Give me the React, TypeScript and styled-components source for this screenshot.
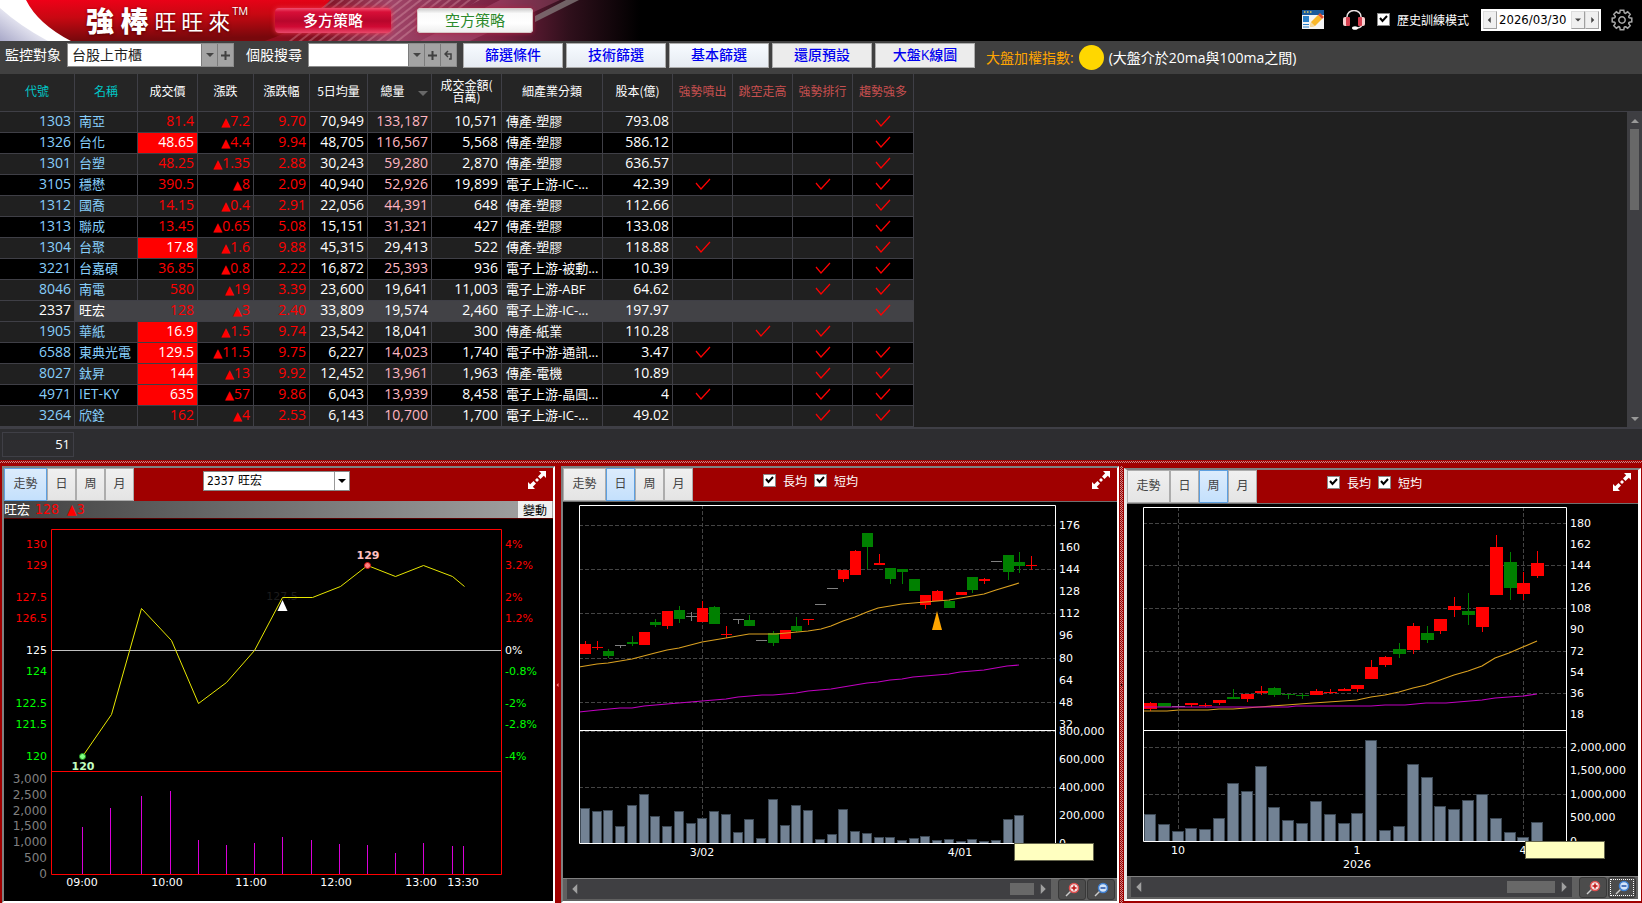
import React from 'react';
import styled, { createGlobalStyle, css } from 'styled-components';

const CJK = '"Noto Sans CJK TC"';
const UI = `"Open Sans", "DejaVu Sans", ${CJK}, sans-serif`;
const CHART = `"DejaVu Sans", ${CJK}, sans-serif`;

const GlobalStyle = createGlobalStyle`
  *, *::before, *::after { box-sizing: border-box; }
  body { margin: 0; background: #a00000; color: #fff; font: 14px/20px ${UI}; }
  button, input, select { font: inherit; margin: 0; padding: 0; border: 0; border-radius: 0; }
  svg { display: block; }
`;

const Page = styled.div`
  display: flex;
  flex-direction: column;
  min-height: 100vh;
`;

/* ---------- banner ---------- */

const Banner = styled.header`
  display: flex;
  align-items: center;
  height: 41px;
  background: #000;
  position: relative;
  overflow: hidden;
`;

const BannerArt = styled.svg`
  position: absolute;
  left: 0;
  top: 0;
`;

const Brand = styled.h1`
  display: flex;
  align-items: center;
  margin: 0 0 0 86px;
  width: 189px;
  height: 41px;
  font-family: ${CJK}, sans-serif;
  font-weight: 400;
  position: relative;
  text-shadow: 0 1px 3px #500;
  white-space: nowrap;
`;

const BrandStrong = styled.span`
  font-size: 28px;
  line-height: 38px;
  padding-bottom: 2px;
  font-weight: 900;
`;

const BrandLight = styled.span`
  margin-left: 6px;
  padding-bottom: 2px;
  font-size: 22px;
  line-height: 38px;
`;

const Trademark = styled.span`
  align-self: flex-start;
  margin-left: 2px;
  font: 11px/21px ${UI};
`;

const StrategyButton = styled.button<{ $long?: boolean }>`
  position: relative;
  width: 116px;
  height: 25px;
  margin-right: 26px;
  padding-bottom: 1px;
  border-radius: 4px;
  font-size: 15px;
  line-height: 24px;
  ${p => p.$long
    ? css`
        color: #fff;
        font-weight: 500;
        background: linear-gradient(#f05070, #d80f38 16%, #b8062c 52%, #d00a34 75%, #e8486a);
        box-shadow: 0 0 5px #f0304a;
      `
    : css`
        color: #2c8a2c;
        background: linear-gradient(#c8c8c8, #fafafa 22%, #fff 60%, #ededed);
        box-shadow: 0 0 4px #b02040, inset 0 0 0 1px #d8c8c8;
      `}
`;

const BannerTools = styled.div`
  display: flex;
  align-items: center;
  margin-left: auto;
  padding: 0 9px 2px 0;
  position: relative;
`;

const IconButton = styled.button<{ $gap: number }>`
  display: grid;
  place-items: center;
  margin-right: ${p => p.$gap}px;
  background: none;
`;

const CheckLabel = styled.label`
  display: flex;
  align-items: center;
  font: 12px/16px ${CJK}, sans-serif;
  color: #fff;
`;

const CheckBox = styled.input.attrs({ type: 'checkbox' })`
  appearance: none;
  width: 13px;
  height: 13px;
  margin-right: 7px;
  border: 1px solid #888;
  background: #fff;
  &:checked {
    background: #fff url("data:image/svg+xml,%3Csvg xmlns='http://www.w3.org/2000/svg' width='11' height='11'%3E%3Cpath d='M2 4l2.500 3L9 2' fill='none' stroke='black' stroke-width='2'/%3E%3C/svg%3E");
  }
`;

const DateBox = styled.div`
  display: flex;
  align-items: stretch;
  width: 120px;
  height: 22px;
  margin: 0 10px 0 12px;
  padding: 2px;
  background: #fff;
`;

const DateInput = styled.input`
  flex: 1;
  min-width: 0;
  padding-left: 2px;
  background: #fff;
  color: #000;
  font: 13px/18px "DejaVu Sans Condensed", "DejaVu Sans", sans-serif;
`;

const SmallStep = styled.button`
  display: grid;
  place-items: center;
  width: 14px;
  background: #f0f0f0;
  border: 1px solid #a0a0a0;
  border-top-color: #ddd;
  border-left-color: #ddd;
`;

/* ---------- filter toolbar ---------- */

const Toolbar = styled.div`
  display: flex;
  align-items: flex-start;
  height: 33px;
  padding: 2px 0 0 5px;
  background: #404040;
  white-space: nowrap;
`;

const FieldLabel = styled.label`
  width: 56px;
  margin-right: 6px;
  line-height: 23px;
`;

const Combo = styled.div<{ $width: number; $gap: number }>`
  display: flex;
  width: ${p => p.$width}px;
  height: 24px;
  margin-right: ${p => p.$gap}px;
  border: 1px solid #8c8c8c;
  background: #fff;
`;

const ComboSelect = styled.select`
  flex: 1;
  min-width: 0;
  padding-left: 4px;
  appearance: none;
  background: #fff;
  color: #222;
`;

const ComboInput = styled.input`
  flex: 1;
  min-width: 0;
  padding: 0 4px;
  background: #fff;
  color: #222;
`;

const ComboButton = styled.button`
  display: grid;
  place-items: center;
  width: 16px;
  background: #a3a3a3;
  border-left: 1px solid #7c7c7c;
`;

const FilterButton = styled.button<{ $plain?: boolean }>`
  width: 100px;
  height: 25px;
  margin-right: 3px;
  padding-bottom: 1px;
  border: 1px solid #acacac;
  background: ${p => (p.$plain ? '#ececec' : 'linear-gradient(#f7fbff, #e6ebf2)')};
  color: #0000f0;
  font-weight: 500;
  line-height: 22px;
`;

const IndexStatus = styled.div`
  display: flex;
  align-items: center;
  margin: 1px 0 0 8px;
  height: 27px;
  color: #ffa500;
`;

const Lamp = styled.span`
  width: 25px;
  height: 25px;
  margin: 0 5px;
  border-radius: 50%;
  background: #ffd700;
`;

const IndexNote = styled.span`
  color: #fff;
`;

/* ---------- stock table ---------- */

const GridArea = styled.section`
  display: flex;
  background: #202020;
  border-bottom: 2px solid #3f3f46;
`;

const StockTable = styled.table`
  flex: 1;
  width: 100%;
  min-width: 0;
  table-layout: fixed;
  border-collapse: separate;
  border-spacing: 0;
`;

const Th = styled.th<{ $color?: string; $sorted?: boolean }>`
  height: 38px;
  padding: 0 ${p => (p.$sorted ? 14 : 0)}px 4px 0;
  border-right: 1px solid #3f3f46;
  border-bottom: 1px solid #3f3f46;
  background: #252525;
  color: ${p => p.$color || '#fff'};
  font: 12px/12px ${CJK}, sans-serif;
  text-align: center;
  white-space: pre-line;
  position: relative;
  &:last-child { border-right: 0; }
`;

const SortMark = styled.svg`
  position: absolute;
  right: 3px;
  top: 17px;
`;

const Row = styled.tr<{ $active?: boolean }>`
  background: ${p => (p.$active ? '#424246' : '#202020')};
  &:nth-child(even) { background: ${p => (p.$active ? '#424246' : '#000')}; }
`;

const Td = styled.td<{ $color?: string; $fill?: string; $align?: string; $active?: boolean; $latin?: boolean }>`
  height: 21px;
  padding: 0 3px 2px;
  border-right: 1px solid ${p => (p.$active ? '#424246' : '#3f3f46')};
  border-bottom: 1px solid #3f3f46;
  color: ${p => p.$color || '#fff'};
  background: ${p => p.$fill || 'transparent'};
  text-align: ${p => p.$align || 'right'};
  font-size: ${p => (p.$align === 'left' && !p.$latin ? 13 : 14)}px;
  line-height: 18px;
  white-space: nowrap;
  overflow: hidden;
  ${p => p.$align === 'left' && css`padding-left: 4px; padding-right: 0;`}
`;

const UpMark = styled.span`
  font-size: 12px;
  line-height: 16px;
`;

const Filler = styled.td`
  padding: 0;
  background: #202020;
`;

const Tick = styled.svg`
  margin: 0 auto;
`;

const ScrollColumn = styled.div`
  display: flex;
  flex-direction: column;
  width: 15px;
  background: #3e3e42;
`;

const ScrollCap = styled.div`
  height: 38px;
  background: #252525;
  border-bottom: 1px solid #3f3f46;
`;

const ScrollArrow = styled.button<{ $end?: boolean }>`
  display: grid;
  place-items: center;
  width: 15px;
  height: 17px;
  margin-top: ${p => (p.$end ? 'auto' : '0')};
  background: none;
`;

const ScrollThumb = styled.div`
  width: 9px;
  height: 81px;
  margin: 0 auto;
  background: #686868;
`;

const SummaryBar = styled.div`
  height: 31px;
  padding: 3px 2px;
  background: #2d2d30;
`;

const SummaryCell = styled.div`
  width: 72px;
  height: 25px;
  padding-right: 3px;
  border: 1px solid #3f3f46;
  text-align: right;
  font-size: 13px;
  line-height: 23px;
`;

/* ---------- chart panels ---------- */

const checker = '#c98a8a 25%, #a00000 0 50%, #c98a8a 0 75%, #a00000 0';

const HSplitter = styled.div`
  display: flex;
  justify-content: center;
  height: 6px;
  padding-top: 1px;
  background: conic-gradient(${checker}) 0 1px / 2px 2px;
  background-clip: content-box;
  border-bottom: 3px solid #a00000;
`;

const VSplitter = styled.div<{ $dotted?: boolean }>`
  display: flex;
  align-items: center;
  justify-content: center;
  border: solid #a00000;
  border-width: 0 1px;
  background: ${p => (p.$dotted ? `conic-gradient(${checker}) 0 0 / 2px 2px` : '#a00000')};
`;

const Panels = styled.main`
  flex: 1;
  display: grid;
  grid-template-columns: minmax(0, 553fr) 6px minmax(0, 558fr) 5px minmax(0, 517fr);
  align-items: stretch;
  padding: 0 1px 0 2px;
  background: #a00000;
`;

const Panel = styled.section<{ $inner?: boolean }>`
  display: flex;
  flex-direction: column;
  align-self: start;
  margin: ${p => (p.$inner ? '2px 0' : '0')};
  border: 2px solid;
  border-color: #808080 #fff #fff #808080;
  background: #000;
  ${p => p.$inner && css`border-left: 3px solid #e8e8e8; border-right-width: 3px;`}
`;

const PanelHead = styled.div`
  display: flex;
  height: 33px;
  background: #a00000;
`;

const Tab = styled.button<{ $on?: boolean; $wide?: boolean }>`
  width: ${p => (p.$wide ? 43 : 29)}px;
  height: 33px;
  padding-bottom: 4px;
  border: 1px solid ${p => (p.$on ? '#5c9fe0' : '#acacac')};
  background: ${p => (p.$on ? 'linear-gradient(#dcecfc, #c4e0fc)' : 'linear-gradient(#f0f0f0, #e4e4e4)')};
  color: #444;
  font: 12px/16px ${CJK}, sans-serif;
`;

const SymbolCombo = styled.div`
  display: flex;
  width: 147px;
  height: 20px;
  margin: 3px 0 0 69px;
  border: 1px solid #888;
  background: #fff;
`;

const SymbolSelect = styled.select`
  flex: 1;
  min-width: 0;
  padding-left: 3px;
  appearance: none;
  background: #fff;
  color: #000;
  font: 12px/18px "DejaVu Sans Condensed", ${CJK}, sans-serif;
`;

const SymbolArrow = styled.button`
  display: grid;
  place-items: center;
  width: 15px;
  background: #fff;
  border-left: 1px solid #999;
`;

const Averages = styled.div`
  display: flex;
  align-items: center;
  gap: 7px;
  height: 25px;
  margin-left: 70px;
`;

const Expand = styled.button`
  width: 18px;
  height: 18px;
  margin: 3px 7px 0 auto;
  background: none;
`;

const QuoteBar = styled.div`
  display: flex;
  align-items: center;
  height: 18px;
  background: linear-gradient(90deg, #404040, #a4a4a4);
  border-bottom: 1px solid #500;
  font-size: 13px;
  line-height: 17px;
  white-space: pre;
`;

const QuoteValue = styled.span`
  margin-left: 5px;
  color: #f00;
  font: 14px/17px "DejaVu Sans Condensed", "DejaVu Sans", sans-serif;
`;

const ChangeButton = styled.button`
  align-self: stretch;
  width: 34px;
  margin: 0 1px 0 auto;
  background: #f0f0f0;
  color: #000;
  font: 12px/17px ${CJK}, sans-serif;
`;

const HeadLine = styled.div`
  height: 1px;
  background: #707070;
`;

const Chart = styled.svg`
  width: 100%;
  height: auto;
  background: #000;
  font-family: ${CHART};
  font-size: 11px;
  fill: #fff;
`;

const PanelFoot = styled.div`
  display: flex;
  align-items: flex-start;
  height: 23px;
  padding: 0 2px 0 4px;
  border-top: 1px solid #808080;
  background: #606060;
`;

const Track = styled.div`
  display: flex;
  flex: 1;
  align-items: center;
  height: 20px;
  padding: 0 2px;
  background: #3f3f42;
`;

const TrackArrow = styled.button`
  display: grid;
  place-items: center;
  width: 14px;
  height: 20px;
  background: none;
`;

const TrackThumb = styled.div<{ $w: number }>`
  width: ${p => p.$w}px;
  height: 12px;
  margin: 0 1px 0 auto;
  background: #686868;
`;

const ZoomButtons = styled.div`
  display: flex;
  gap: 1px;
  margin-left: 7px;
`;

const ZoomButton = styled.button<{ $focus?: boolean }>`
  display: grid;
  place-items: center;
  width: 28px;
  height: 21px;
  border: 1px solid #383838;
  border-radius: 3px;
  background: #4c4c4c;
  ${p => p.$focus && css`outline: 1px dotted #fff; outline-offset: -3px;`}
`;

/* ---------- icons ---------- */

type Dir = 'left' | 'right' | 'up' | 'down';
const arrowPaths: Record<Dir, string> = {
  left: 'M5 0V8L1 4Z', right: 'M3 0V8L7 4Z', up: 'M0 6H8L4 2Z', down: 'M0 2H8L4 6Z',
};
const Arrow = ({ dir, color = '#444', size = 8 }: { dir: Dir; color?: string; size?: number }) => (
  <svg width={size} height={size} viewBox="0 0 8 8" aria-hidden="true"><path d={arrowPaths[dir]} fill={color} /></svg>
);

const PlusIcon = () => (
  <svg width="9" height="9" aria-hidden="true"><path d="M4.500 0V9M0 4.500H9" stroke="#404040" strokeWidth="2" /></svg>
);

const BackIcon = () => (
  <svg width="9" height="10" fill="none" stroke="#404040" aria-hidden="true">
    <path d="M4 1L1 4L4 7M1 4H7V9H5" strokeWidth="1.500" />
  </svg>
);

const ExpandIcon = () => (
  <svg width="18" height="18" fill="#fff" aria-hidden="true">
    <path d="M11 0H18V7L15.800 4.800L12.500 8L10 5.500L13.200 2.200Z" />
    <path d="M7 18H0V11L2.200 13.200L5.500 10L8 12.500L4.800 15.800Z" />
    <path d="M7 9L9 7L11 9L9 11Z" />
  </svg>
);

const EditWindowIcon = () => (
  <svg width="22" height="19" aria-hidden="true">
    <path d="M0 0H22V19H0Z" fill="#f4f4f4" />
    <path d="M0 0H22V5H0Z" fill="#1a5a9c" />
    <path d="M2 2h1.500M5 2h1.500M8 2h1.500" stroke="#e8d060" strokeWidth="1.500" />
    <path d="M1 6H7V12H1Z" fill="#2a80c8" />
    <path d="M1 14.500H7M1 17H7" stroke="#2a80c8" />
    <path d="M8 17L9 12L16 5L20 9L13 16Z" fill="#f9b72a" />
    <path d="M16 5L18 3L22 7L20 9Z" fill="#e4502c" />
    <path d="M8 17L9 12L13 16Z" fill="#f4d8a0" />
  </svg>
);

const HeadsetIcon = () => (
  <svg width="22" height="20" fill="none" aria-hidden="true">
    <path d="M4 8C3 -2 19 -2 18 8M19 14C19 17 16 18 13 18" stroke="#e8e0e0" strokeWidth="1.500" />
    <rect x="0" y="7" width="5" height="9" rx="2" fill="#f8d0d0" />
    <rect x="3" y="7" width="4" height="9" rx="1" fill="#d84050" />
    <rect x="17" y="7" width="5" height="9" rx="2" fill="#f8d0d0" />
    <rect x="15" y="7" width="4" height="9" rx="1" fill="#d84050" />
    <ellipse cx="12" cy="18" rx="3" ry="1.800" fill="#fff" />
  </svg>
);

const teeth = Array.from({ length: 8 }, (_, i) => i * 45);
const GearIcon = () => (
  <svg width="22" height="22" viewBox="-11 -11 22 22" fill="none" stroke="#a8a8a8" strokeWidth="1.500" aria-hidden="true">
    {teeth.map(a => (
      <path key={a} transform={`rotate(${a})`} d="M-2.200 -7.400L-1.800 -9.800H1.800L2.200 -7.400Q2.800 -6.400 4.100 -6.700" />
    ))}
    <circle r="3.200" />
  </svg>
);

const MagnifierIcon = ({ minus }: { minus?: boolean }) => (
  <svg width="15" height="15" aria-hidden="true">
    <path d="M1 14L6 9" stroke="#ccc" strokeWidth="1.500" />
    <circle cx="9" cy="6" r="4.500" fill={minus ? '#d4e4f8' : '#f4e4e4'} stroke={minus ? '#3f7fd0' : '#e05050'} strokeWidth="1.500" />
    <path d={minus ? 'M6.500 6H11.500' : 'M6.500 6H11.500M9 3.500V8.500'} stroke={minus ? '#1f50a8' : '#c01010'} strokeWidth="1.500" />
  </svg>
);

/* ---------- data ---------- */

const columns: [string, number, string?][] = [
  ['代號', 75, '#00c8c8'], ['名稱', 63, '#00c8c8'], ['成交價', 60], ['漲跌', 56], ['漲跌幅', 56],
  ['5日均量', 58], ['總量', 64], ['成交金額(\n百萬)', 70], ['細產業分類', 101], ['股本(億)', 70],
  ['強勢噴出', 60, '#c85050'], ['跳空走高', 60, '#c85050'], ['強勢排行', 60, '#c85050'], ['趨勢強多', 61, '#c85050'],
];

type Stock = [string, string, string, string, string, string, string, string, string, string, string];
// The last field marks which of the four signal columns are ticked.
const stocks: Stock[] = [
  ['1303', '南亞', '81.4', '7.2', '9.70', '70,949', '133,187', '10,571', '傳產-塑膠', '793.08', '0001'],
  ['1326', '台化', '48.65', '4.4', '9.94', '48,705', '116,567', '5,568', '傳產-塑膠', '586.12', '0001'],
  ['1301', '台塑', '48.25', '1.35', '2.88', '30,243', '59,280', '2,870', '傳產-塑膠', '636.57', '0001'],
  ['3105', '穩懋', '390.5', '8', '2.09', '40,940', '52,926', '19,899', '電子上游-IC-...', '42.39', '1011'],
  ['1312', '國喬', '14.15', '0.4', '2.91', '22,056', '44,391', '648', '傳產-塑膠', '112.66', '0001'],
  ['1313', '聯成', '13.45', '0.65', '5.08', '15,151', '31,321', '427', '傳產-塑膠', '133.08', '0001'],
  ['1304', '台聚', '17.8', '1.6', '9.88', '45,315', '29,413', '522', '傳產-塑膠', '118.88', '1001'],
  ['3221', '台嘉碩', '36.85', '0.8', '2.22', '16,872', '25,393', '936', '電子上游-被動...', '10.39', '0011'],
  ['8046', '南電', '580', '19', '3.39', '23,600', '19,641', '11,003', '電子上游-ABF', '64.62', '0011'],
  ['2337', '旺宏', '128', '3', '2.40', '33,809', '19,574', '2,460', '電子上游-IC-...', '197.97', '0001'],
  ['1905', '華紙', '16.9', '1.5', '9.74', '23,542', '18,041', '300', '傳產-紙業', '110.28', '0110'],
  ['6588', '東典光電', '129.5', '11.5', '9.75', '6,227', '14,023', '1,740', '電子中游-通訊...', '3.47', '1011'],
  ['8027', '鈦昇', '144', '13', '9.92', '12,452', '13,961', '1,963', '傳產-電機', '10.89', '0011'],
  ['4971', 'IET-KY', '635', '57', '9.86', '6,043', '13,939', '8,458', '電子上游-晶圓...', '4', '1011'],
  ['3264', '欣銓', '162', '4', '2.53', '6,143', '10,700', '1,700', '電子上游-IC-...', '49.02', '0011'],
];
const limitUp = ['1326', '1304', '1905', '6588', '8027', '4971'];
const plainVolume = ['1304', '8046', '2337', '1905'];

// Candle: colour, body top, body bottom, wick top, wick bottom.
type Candle = [string, number, number, number, number];
const R = '#f00', G = '#008000', N = '#808080';
const daily: Candle[] = [
  [R, 139, 149, 136, 149], [R, 142, 143, 136, 145], [G, 146, 151, 144, 153], [N, 140, 141, 140, 143], [G, 137, 139, 131, 141],
  [R, 127, 140, 127, 140], [G, 117, 120, 114, 122], [R, 106, 121, 106, 124], [G, 105, 114, 101, 118], [N, 111, 112, 107, 116],
  [R, 103, 117, 96, 117], [G, 102, 119, 101, 119], [R, 129, 130, 121, 133], [N, 114, 115, 114, 119], [G, 115, 121, 110, 121],
  [N, 135, 136, 135, 136], [G, 128, 138, 126, 141], [R, 125, 134, 125, 134], [G, 121, 126, 112, 127], [R, 114, 115, 114, 120],
  [N, 99, 100, 99, 100], [N, 83, 84, 83, 84], [R, 65, 74, 65, 77], [R, 46, 70, 45, 70], [G, 28, 42, 28, 64],
  [R, 58, 60, 49, 60], [G, 63, 74, 63, 79], [G, 64, 67, 64, 79], [G, 74, 86, 74, 86], [R, 90, 100, 90, 104],
  [R, 86, 96, 85, 96], [G, 96, 103, 95, 103], [R, 87, 90, 87, 90], [G, 72, 85, 72, 88], [R, 74, 76, 73, 79],
  [N, 56, 57, 56, 57], [G, 50, 67, 50, 75], [G, 57, 61, 47, 68], [R, 60, 61, 51, 65],
];
const dailyVolume = [303, 306, 305, 321, 300, 289, 311, 321, 306, 318, 313, 306, 309, 327, 314, 333, 294, 320, 300, 305, 334, 329, 304,
  326, 328, 332, 332, 335, 333, 331, 335, 334, 336, 334, 336, 335, 314, 310];
const dailyShort = '0,162 18,159 29,158 53,154 76,148 88,145 100,143 123,137 147,133 170,129 197,129 229,126 242,124 252,121 264,116 276,112 288,107 299,103 323,99 346,97 370,95 405,89 417,85 440,78';
const dailyLong = '0,207 19,205 41,203 53,203 65,201 88,199 123,196 147,194 159,192 183,190 194,190 217,188 229,186 252,184 276,180 288,178 299,177 311,175 323,174 334,172 370,169 381,167 405,165 428,161 440,160';

const weekly: Candle[] = [
  [R, 196, 202, 195, 204], [G, 196, 200, 196, 200], [N, 199, 200, 197, 200], [R, 196, 198, 196, 200], [R, 198, 199, 196, 200],
  [R, 193, 196, 193, 198], [G, 190, 192, 182, 192], [R, 187, 192, 187, 195], [R, 184, 186, 179, 188], [G, 181, 188, 180, 190],
  [G, 187, 188, 187, 192], [G, 188, 189, 186, 192], [R, 184, 188, 182, 188], [R, 185, 186, 182, 187], [R, 182, 184, 181, 184],
  [R, 178, 182, 178, 185], [R, 160, 172, 153, 172], [R, 150, 158, 149, 160], [G, 142, 147, 136, 151], [R, 119, 143, 116, 147],
  [G, 126, 133, 119, 136], [R, 112, 124, 112, 127], [R, 99, 103, 90, 110], [G, 104, 108, 86, 118], [R, 100, 120, 100, 125],
  [R, 40, 88, 28, 88], [G, 55, 81, 45, 93], [R, 76, 87, 65, 93], [R, 56, 69, 44, 71],
];
const weeklyVolume = [307, 317, 324, 321, 322, 311, 276, 284, 259, 300, 313, 316, 294, 307, 316, 306, 233, 323, 319, 257, 270, 299, 302,
  293, 287, 311, 325, 330, 315];
const weeklyShort = '0,204 24,204 36,203 65,203 76,202 90,202 116,200 143,198 170,196 200,194 214,193 228,190 242,188 256,185 270,181 283,178 297,173 311,168 325,164 339,159 352,151 366,146 394,134';
const weeklyLong = '0,200 145,200 153,199 228,199 242,198 262,198 283,196 303,196 339,193 352,191 380,189 394,187';

type Label = [string, number];
interface KChartProps {
  title: string;
  size: [number, number];
  origin: [number, number];
  frame: [number, number, number];
  pitch: number;
  first: number;
  body: number;
  bar: number;
  candles: Candle[];
  volume: number[];
  short: string;
  long: string;
  gridH: number[];
  gridV: number[];
  scale: Label[];
  dates: [string, number, number][];
  marker?: number;
  tip: [number, number];
}

const KChart = (p: KChartProps) => {
  const [w, split, h] = p.frame;
  return (
    <Chart viewBox={`0 0 ${p.size[0]} ${p.size[1]}`} role="img" aria-label={p.title}>
      <g transform={`translate(${p.origin[0]} ${p.origin[1]})`}>
        <g stroke="#444" strokeDasharray="4 2" shapeRendering="crispEdges">
          {p.gridH.map(y => <path key={y} d={`M0 ${y + 0.5}H${w}`} />)}
          {p.gridV.map(x => <path key={x} d={`M${x + 0.5} 0V${h}`} />)}
        </g>
        {p.candles.map(([c, t, b, hi, lo], i) => {
          const x = Math.round(p.first + i * p.pitch);
          return (
            <g key={i} fill={c} shapeRendering="crispEdges">
              <rect x={x} y={hi} width="1" height={lo - hi} />
              <rect x={x - (p.body - 1) / 2} y={t} width={p.body} height={b - t} />
            </g>
          );
        })}
        {p.volume.map((y, i) => {
          const x = Math.round(p.first + i * p.pitch);
          return (
            <rect key={i} x={x - p.bar / 2 + 0.5} y={y + 0.5} width={p.bar - 1} height={h - y} fill="#728294" stroke="#3c4854" />
          );
        })}
        <polyline points={p.short} fill="none" stroke="#daa020" strokeWidth="1.200" />
        <polyline points={p.long} fill="none" stroke="#c000c0" strokeWidth="1.200" />
        {p.marker && <path d={`M${p.marker} 106L${p.marker + 5} 125H${p.marker - 5}Z`} fill="#ffa500" />}
        <path d={`M0.500 0.500H${w + 0.5}V${h + 0.5}H0.500ZM0 ${split + 0.5}H${w}`} fill="none" stroke="#fff" />
        {p.scale.map(([s, y]) => <text key={s} x={w + 4} y={y + 4}>{s}</text>)}
        <rect x="0" y={h + 1} width={w + 60} height="6" fill="#000" />
        {p.dates.map(([s, x, y]) => <text key={s} x={x} y={y} textAnchor="middle">{s}</text>)}
        <rect x={p.tip[0] + 0.5} y={h + 0.5} width={p.tip[1]} height="17" fill="#ffffc0" stroke="#65654c" />
      </g>
    </Chart>
  );
};

const priceLabels: [string, string, number][] = [
  ['130', '4%', 544], ['129', '3.2%', 565], ['127.5', '2%', 597], ['126.5', '1.2%', 618], ['125', '0%', 650],
  ['124', '-0.8%', 671], ['122.5', '-2%', 703], ['121.5', '-2.8%', 724], ['120', '-4%', 756],
];
const trendVolumeLabels: Label[] = [['3,000', 779], ['2,500', 795], ['2,000', 811], ['1,500', 826], ['1,000', 842], ['500', 858], ['0', 874]];
const trendBars = [[82, 827], [110, 808], [141, 796], [170, 791], [198, 840], [226, 845], [254, 843], [282, 837], [311, 840], [339, 844],
  [367, 845], [395, 853], [423, 843], [452, 846], [463, 846]];
const trendTimes: Label[] = [['09:00', 82], ['10:00', 167], ['11:00', 251], ['12:00', 336], ['13:00', 421], ['13:30', 463]];

const TrendChart = () => (
  <Chart viewBox="4 519 549 382" role="img" aria-label="旺宏 走勢圖">
    <path d="M51 650.500H501" stroke="#c0c0c0" />
    <path d="M51.500 529.500H501.500V874.500H51.500ZM51 771.500H501" fill="none" stroke="#f00" />
    {trendBars.map(([x, y]) => <path key={x} d={`M${x + 0.5} ${y}V874`} stroke="#d800d8" />)}
    <text x="282" y="600" textAnchor="middle" fill="#1c1c1c">127.5</text>
    <polyline
      points="82,756 111,714 141,608 171,640 198,703 226,682 254,650 282,597 312,597 340,586 367,565 395,576 423,565 452,576 464,586"
      transform="translate(0.500 0.500)" fill="none" stroke="#e8e800"
    />
    <circle cx="82.500" cy="756.500" r="3" fill="#80ff80" stroke="#209020" />
    <circle cx="367.500" cy="565.500" r="3" fill="#ff8080" stroke="#d01010" />
    <path d="M282.500 600L287.500 611H277.500Z" />
    <g fontWeight="700" textAnchor="middle">
      <text x="368" y="559" fill="#ffc0c0">129</text>
      <text x="83" y="770" fill="#c0ffc0">120</text>
    </g>
    {priceLabels.map(([price, pct, y]) => (
      <g key={price} fill={y < 650 ? '#f00' : y > 650 ? '#0f0' : '#fff'}>
        <text x="47" y={y + 4} textAnchor="end">{price}</text>
        <text x="505" y={y + 4}>{pct}</text>
      </g>
    ))}
    <g fill="#808080" fontSize="12" textAnchor="end">
      {trendVolumeLabels.map(([s, y]) => <text key={s} x="47" y={y + 4}>{s}</text>)}
    </g>
    {trendTimes.map(([s, x]) => <text key={s} x={x} y="886" textAnchor="middle">{s}</text>)}
  </Chart>
);

const Tabs = ({ active }: { active: string }) => (
  <>
    {['走勢', '日', '周', '月'].map(t => (
      <Tab key={t} type="button" $wide={t === '走勢'} $on={t === active}>{t}</Tab>
    ))}
  </>
);

const AverageChecks = () => (
  <Averages>
    <CheckLabel><CheckBox defaultChecked />長均</CheckLabel>
    <CheckLabel><CheckBox defaultChecked />短均</CheckLabel>
  </Averages>
);

const ExpandButton = () => <Expand type="button" aria-label="放大"><ExpandIcon /></Expand>;

const ChartFooter = ({ thumb, focus }: { thumb: number; focus?: boolean }) => (
  <PanelFoot>
    <Track>
      <TrackArrow type="button" aria-label="向左"><Arrow dir="left" color="#a0a0a0" size={10} /></TrackArrow>
      <TrackThumb $w={thumb} />
      <TrackArrow type="button" aria-label="向右"><Arrow dir="right" color="#a0a0a0" size={10} /></TrackArrow>
    </Track>
    <ZoomButtons>
      <ZoomButton type="button" aria-label="拉近"><MagnifierIcon /></ZoomButton>
      <ZoomButton type="button" aria-label="拉遠" $focus={focus}><MagnifierIcon minus /></ZoomButton>
    </ZoomButtons>
  </PanelFoot>
);

const BannerBackdrop = () => (
  <BannerArt width="660" height="41" aria-hidden="true">
    <defs>
      <linearGradient id="red" x1="0" x2="0.150" y1="0" y2="1">
        <stop offset="0" stopColor="#f00018" /><stop offset="0.450" stopColor="#c80812" /><stop offset="1" stopColor="#78080c" />
      </linearGradient>
      <linearGradient id="wine" x1="0" x2="1">
        <stop offset="0" stopColor="#a00c1c" /><stop offset="0.200" stopColor="#7c1020" /><stop offset="0.380" stopColor="#a04468" />
        <stop offset="0.650" stopColor="#782040" /><stop offset="0.820" stopColor="#30101c" /><stop offset="1" stopColor="#000" />
      </linearGradient>
      <linearGradient id="lilac" x1="0" x2="1" y1="1" y2="0">
        <stop offset="0" stopColor="#a8a8c8" /><stop offset="0.600" stopColor="#f0f0f8" /><stop offset="1" stopColor="#fff" />
      </linearGradient>
      <pattern id="hatch" width="9" height="6" patternUnits="userSpaceOnUse" patternTransform="rotate(-38)">
        <path d="M0 1H9" stroke="#e8b0b8" strokeOpacity="0.650" />
      </pattern>
    </defs>
    <rect x="240" width="400" height="41" fill="url(#wine)" />
    <path d="M0 0H330Q310 25 265 41H0Z" fill="url(#red)" />
    <path d="M325 0H480L400 41H285Z" fill="url(#hatch)" />
    <path d="M420 41L500 0H560L470 41Z" fill="#c06088" fillOpacity="0.350" />
    <path d="M535 16L566 0H579L535 22Z" fill="#8c8484" fillOpacity="0.700" />
    <path d="M0 0H26Q38 24 71 41H0Z" fill="#fff" />
    <path d="M0 8Q20 26 48 41H0Z" fill="url(#lilac)" />
  </BannerArt>
);

export default function App() {
  return (
    <Page>
      <GlobalStyle />
      <Banner>
        <BannerBackdrop />
        <Brand>
          <BrandStrong>強 棒</BrandStrong>
          <BrandLight>旺 旺 來</BrandLight>
          <Trademark>TM</Trademark>
        </Brand>
        <StrategyButton type="button" $long>多方策略</StrategyButton>
        <StrategyButton type="button">空方策略</StrategyButton>
        <BannerTools>
          <IconButton type="button" $gap={19} aria-label="編輯版面"><EditWindowIcon /></IconButton>
          <IconButton type="button" $gap={12} aria-label="客服"><HeadsetIcon /></IconButton>
          <CheckLabel><CheckBox defaultChecked />歷史訓練模式</CheckLabel>
          <DateBox>
            <SmallStep type="button" aria-label="前一日"><Arrow dir="left" size={6} /></SmallStep>
            <DateInput aria-label="日期" defaultValue="2026/03/30" />
            <SmallStep type="button" aria-label="選擇日期"><Arrow dir="down" size={6} /></SmallStep>
            <SmallStep type="button" aria-label="後一日"><Arrow dir="right" size={6} /></SmallStep>
          </DateBox>
          <IconButton type="button" $gap={0} aria-label="設定"><GearIcon /></IconButton>
        </BannerTools>
      </Banner>

      <Toolbar>
        <FieldLabel htmlFor="watch">監控對象</FieldLabel>
        <Combo $width={167} $gap={12}>
          <ComboSelect id="watch" defaultValue="a"><option value="a">台股上市櫃</option></ComboSelect>
          <ComboButton type="button" aria-label="展開"><Arrow dir="down" /></ComboButton>
          <ComboButton type="button" aria-label="新增"><PlusIcon /></ComboButton>
        </Combo>
        <FieldLabel htmlFor="search">個股搜尋</FieldLabel>
        <Combo $width={149} $gap={6}>
          <ComboInput id="search" />
          <ComboButton type="button" aria-label="展開"><Arrow dir="down" /></ComboButton>
          <ComboButton type="button" aria-label="新增"><PlusIcon /></ComboButton>
          <ComboButton type="button" aria-label="返回"><BackIcon /></ComboButton>
        </Combo>
        <FilterButton type="button">篩選條件</FilterButton>
        <FilterButton type="button">技術篩選</FilterButton>
        <FilterButton type="button">基本篩選</FilterButton>
        <FilterButton type="button" $plain>還原預設</FilterButton>
        <FilterButton type="button" $plain>大盤K線圖</FilterButton>
        <IndexStatus>
          大盤加權指數:
          <Lamp />
          <IndexNote>(大盤介於20ma與100ma之間)</IndexNote>
        </IndexStatus>
      </Toolbar>

      <GridArea>
        <StockTable>
          <colgroup>
            {columns.map(([name, w]) => <col key={name} width={w} />)}
            <col />
          </colgroup>
          <thead>
            <tr>
              {columns.map(([name, , color]) => (
                <Th key={name} scope="col" $color={color} $sorted={name === '總量'}>
                  {name}
                  {name === '總量' && <SortMark width="10" height="6"><path d="M0 0H10L5 5Z" fill="#686868" /></SortMark>}
                </Th>
              ))}
              <Th as="td" />
            </tr>
          </thead>
          <tbody>
            {stocks.map(([code, name, price, diff, pct, avg, vol, amount, sector, capital, flags]) => {
              const on = code === '2337';
              const full = limitUp.includes(code);
              const blue = on ? '#fff' : '#87cefa';
              return (
                <Row key={code} $active={on}>
                  <Td $color={blue} $fill={on ? '#202020' : undefined}>{code}</Td>
                  <Td $color={blue} $align="left" $active={on} $latin={/^[A-Z-]+$/.test(name)}>{name}</Td>
                  <Td $color={full ? '#fff' : '#f00'} $fill={full ? '#f00' : undefined} $active={on}>{price}</Td>
                  <Td $color="#f00" $active={on}><UpMark>▲</UpMark>{diff}</Td>
                  <Td $color="#f00" $active={on}>{pct}</Td>
                  <Td $active={on}>{avg}</Td>
                  <Td $color={plainVolume.includes(code) ? '#fff' : '#ffb6c1'} $active={on}>{vol}</Td>
                  <Td $active={on}>{amount}</Td>
                  <Td $align="left" $active={on}>{sector}</Td>
                  <Td $active={on}>{capital}</Td>
                  {flags.split('').map((f, i) => (
                    <Td key={i} $align="center" $active={on}>
                      {f === '1' && (
                        <Tick width="16" height="12" role="img" aria-label="符合">
                          <path d="M1 5L6 11L15 1" fill="none" stroke="#f00" strokeWidth="1.200" />
                        </Tick>
                      )}
                    </Td>
                  ))}
                  <Filler />
                </Row>
              );
            })}
          </tbody>
        </StockTable>
        <ScrollColumn>
          <ScrollCap />
          <ScrollArrow type="button" aria-label="向上"><Arrow dir="up" color="#999" /></ScrollArrow>
          <ScrollThumb />
          <ScrollArrow type="button" aria-label="向下" $end><Arrow dir="down" color="#999" /></ScrollArrow>
        </ScrollColumn>
      </GridArea>
      <SummaryBar><SummaryCell>51</SummaryCell></SummaryBar>

      <HSplitter />
      <Panels>
        <Panel>
          <PanelHead>
            <Tabs active="走勢" />
            <SymbolCombo>
              <SymbolSelect aria-label="股票" defaultValue="2337"><option value="2337">2337 旺宏</option></SymbolSelect>
              <SymbolArrow type="button" aria-label="展開"><Arrow dir="down" color="#000" /></SymbolArrow>
            </SymbolCombo>
            <ExpandButton />
          </PanelHead>
          <QuoteBar>
            旺宏
            <QuoteValue>128  ▲3</QuoteValue>
            <ChangeButton type="button">變動</ChangeButton>
          </QuoteBar>
          <TrendChart />
        </Panel>
        <VSplitter><Arrow dir="left" color="#ff8080" size={6} /></VSplitter>
        <Panel>
          <PanelHead>
            <Tabs active="日" />
            <AverageChecks />
            <ExpandButton />
          </PanelHead>
          <HeadLine />
          <KChart
            title="旺宏 日K線" size={[554, 376]} origin={[16, 3]} frame={[476, 225, 338]} pitch={11.74} first={6} body={11} bar={10}
            candles={daily} volume={dailyVolume} short={dailyShort} long={dailyLong}
            gridH={[20, 64, 108, 153, 197, 226, 282]} gridV={[123]}
            scale={[['176', 20], ['160', 42], ['144', 64], ['128', 86], ['112', 108], ['96', 130], ['80', 153], ['64', 175], ['48', 197],
              ['32', 219], ['800,000', 226], ['600,000', 254], ['400,000', 282], ['200,000', 310], ['0', 338]]}
            dates={[['3/02', 123, 351], ['4/01', 381, 351]]} marker={358} tip={[435, 79]}
          />
          <ChartFooter thumb={24} />
        </Panel>
        <VSplitter $dotted><Arrow dir="right" color="#000" size={6} /></VSplitter>
        <Panel $inner>
          <PanelHead>
            <Tabs active="周" />
            <AverageChecks />
            <ExpandButton />
          </PanelHead>
          <HeadLine />
          <KChart
            title="旺宏 周K線" size={[511, 372]} origin={[16, 3]} frame={[423, 223, 334]} pitch={13.83} first={7} body={13} bar={12}
            candles={weekly} volume={weeklyVolume} short={weeklyShort} long={weeklyLong}
            gridH={[16, 58, 101, 144, 186, 240, 287]} gridV={[35, 380]}
            scale={[['180', 16], ['162', 37], ['144', 58], ['126', 80], ['108', 101], ['90', 122], ['72', 144], ['54', 165], ['36', 186],
              ['18', 207], ['2,000,000', 240], ['1,500,000', 263], ['1,000,000', 287], ['500,000', 310], ['0', 334]]}
            dates={[['10', 35, 347], ['1', 214, 347], ['2026', 214, 361], ['4', 380, 347]]} tip={[382, 79]}
          />
          <ChartFooter thumb={48} focus />
        </Panel>
      </Panels>
    </Page>
  );
}
